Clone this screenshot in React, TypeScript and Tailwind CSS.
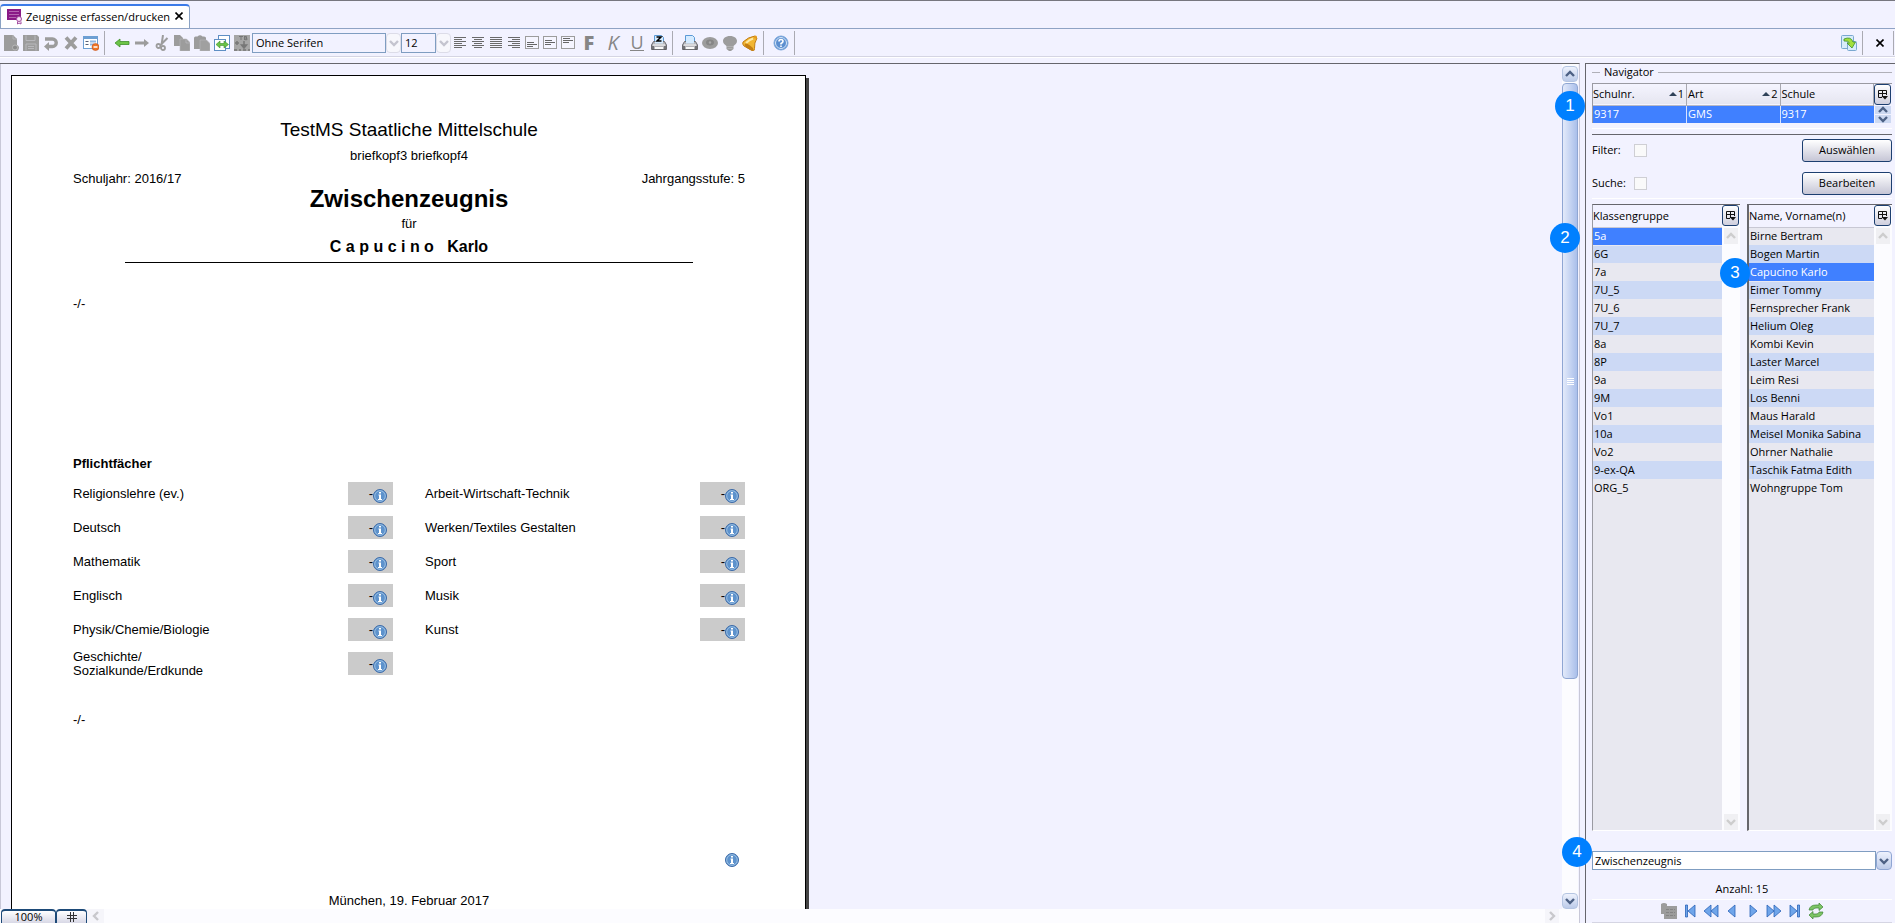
import React from "react";

const classGroups = [
  "5a", "6G", "7a", "7U_5", "7U_6", "7U_7", "8a", "8P",
  "9a", "9M", "Vo1", "10a", "Vo2", "9-ex-QA", "ORG_5",
];

const students = [
  "Birne Bertram",
  "Bogen Martin",
  "Capucino Karlo",
  "Eimer Tommy",
  "Fernsprecher Frank",
  "Helium Oleg",
  "Kombi Kevin",
  "Laster Marcel",
  "Leim Resi",
  "Los Benni",
  "Maus Harald",
  "Meisel Monika Sabina",
  "Ohrner Nathalie",
  "Taschik Fatma Edith",
  "Wohngruppe Tom",
];

const subjectsLeft = [
  "Religionslehre (ev.)",
  "Deutsch",
  "Mathematik",
  "Englisch",
  "Physik/Chemie/Biologie",
  "Geschichte/\nSozialkunde/Erdkunde",
];

const subjectsRight = [
  "Arbeit-Wirtschaft-Technik",
  "Werken/Textiles Gestalten",
  "Sport",
  "Musik",
  "Kunst",
];

interface IconProps {
  children: React.ReactNode;
  size?: number;
}

const Icon = ({ children, size = 16 }: IconProps) => (
  <svg width={size} height={size} viewBox="0 0 16 16" fill="none" aria-hidden="true">
    {children}
  </svg>
);

const GRAY = "#9c9c9c";

const NewIcon = () => (
  <Icon>
    <path d="M1 0h9l4 4v6a3 3 0 1 1-3 6H1z" fill={GRAY} />
    <path d="M10 0v4h4" stroke="#b4b4b8" />
    <circle cx="12" cy="12.500" r="2.500" fill="#8c8c8c" stroke="#b8b8b8" />
  </Icon>
);

const SaveIcon = () => (
  <Icon>
    <path d="M0 0h14l2 2v14H0z" fill={GRAY} />
    <path d="M3 .5v5h9v-5M3 15.500V9h10v6.500" stroke="#b8b8bc" />
    <path d="M5 11.500h6M5 13.500h6" stroke="#b8b8bc" />
  </Icon>
);

const UndoIcon = () => (
  <Icon>
    <path d="M2 4h7.500a3.500 3.500 0 0 1 0 7.500H5" stroke={GRAY} strokeWidth="3.400" />
    <path d="M6 7v9L1 11.500z" fill={GRAY} />
  </Icon>
);

const DeleteIcon = () => (
  <Icon>
    <path d="M3 2.500l10 11M13 2.500l-10 11" stroke={GRAY} strokeWidth="3.800" />
  </Icon>
);

const FormRemoveIcon = () => (
  <Icon>
    <rect x=".5" y="1.500" width="14" height="12" fill="#fff" stroke="#6d9fd3" />
    <path d="M1 3h13" stroke="#6d9fd3" strokeWidth="2" />
    <path d="M2.500 6.500h3M2.500 9.500h3" stroke="#555f78" />
    <path d="M7 6.500h6M7 9.500h4" stroke="#8fb6e2" strokeWidth="2" />
    <circle cx="12.500" cy="12" r="3.500" fill="#ee7526" stroke="#c8511b" strokeWidth=".6" />
    <path d="M10.500 12h4" stroke="#fff" strokeWidth="1.500" />
  </Icon>
);

const ArrowLeftIcon = () => (
  <Icon>
    <path d="M1 8l5-4v2.500h9v3H6V12z" fill="#6cc447" stroke="#3f8f2b" strokeWidth=".8" />
  </Icon>
);

const ArrowRightIcon = () => (
  <Icon>
    <path d="M15 8l-5-4v2.500H1v3h9V12z" fill={GRAY} />
  </Icon>
);

const CutIcon = () => (
  <Icon>
    <path d="M9 0L7.500 10M13.500 3L6 10.500" stroke={GRAY} strokeWidth="2" />
    <circle cx="4.500" cy="11" r="2" stroke={GRAY} strokeWidth="1.800" />
    <circle cx="9" cy="13" r="2" stroke={GRAY} strokeWidth="1.800" />
  </Icon>
);

const CopyIcon = () => (
  <Icon>
    <path d="M0 0h6l3 3v8H0z" fill={GRAY} />
    <path d="M6 4h6.500l3.500 3.500V16H6z" fill={GRAY} stroke="#b8b8bc" strokeWidth=".6" />
    <path d="M12 4.500v3.500h4" stroke="#b8b8bc" strokeWidth=".8" />
  </Icon>
);

const PasteIcon = () => (
  <Icon>
    <path d="M0 3q0-1.500 1.500-1.500h2Q6-1 8.500 1.500h1.500Q12 1.500 12 3v11H0z" fill={GRAY} />
    <path d="M6 5h6.500L16 8.500V16H6z" fill="#a0a0a0" stroke="#b8b8bc" strokeWidth=".6" />
  </Icon>
);

const SwapPagesIcon = () => (
  <Icon>
    <rect x="4.500" y=".5" width="11" height="13" fill="#fff" stroke="#5f8fc4" />
    <rect x=".5" y="4.500" width="11" height="11" fill="#fff" stroke="#5f8fc4" />
    <path d="M2 9.500L6 6v2.500h4V6l4.500 3.500-4.500 3.500v-2.500H6V13z" fill="#6cc447" stroke="#3f8f2b" strokeWidth=".6" />
  </Icon>
);

const TextBlockIcon = () => (
  <Icon>
    <rect width="16" height="16" fill="#a6a6a6" />
    <path d="M5 1.500h4M7 1.500V5M10.500 1v4M10.500 1.500h2v1.500h-2M12 3.500h1v1.200h-2" stroke="#777" />
    <path d="M1 8h4M3 6v4M10 6v5M7.500 10L10 13l2.500-3z" stroke="#777" strokeWidth="1.500" fill="#777" />
    <path d="M0 15h3M5 15h2M9 15h3M14 15h2" stroke="#777" strokeWidth="1.500" />
  </Icon>
);

interface AlignIconProps {
  lines: [number, number][];
}

const AlignIcon = ({ lines }: AlignIconProps) => (
  <svg width="12" height="12" viewBox="0 0 12 12" aria-hidden="true">
    {lines.map(([x, w], i) => (
      <rect key={i} x={x} y={i * 2} width={w} height="1" fill="#6a6a6a" />
    ))}
  </svg>
);

interface BoxIconProps {
  top: number;
}

const BoxIcon = ({ top }: BoxIconProps) => (
  <svg width="14" height="13" viewBox="0 0 14 13" aria-hidden="true">
    <rect x=".5" y=".5" width="13" height="12" fill="#f5f5ff" stroke="#9c9c9c" />
    <rect x="2" y={top} width="7" height="1" fill="#666" />
    <rect x="2" y={top + 2} width="10" height="1" fill="#666" />
    <rect x="2" y={top + 4} width="6" height="1" fill="#666" />
  </svg>
);

interface PrinterIconProps {
  marked?: boolean;
}

const PrinterIcon = ({ marked }: PrinterIconProps) => (
  <Icon>
    <path d="M3.500.5h7l2 2V8h-9z" fill="#d5ebff" stroke="#5a9ad6" />
    <path d="M2.500 6.500h11l2 3.500v4.500H.5V10z" fill="#b4b4ba" stroke="#6d6d72" />
    <path d="M4 6h8v2.500H4z" fill="#d5ebff" />
    <path d="M2 10h12" stroke="#fff" />
    <path d="M4 13h8" stroke="#fafafa" strokeWidth="2" />
    <path d="M2 11v4M14 11v4" stroke="#5d5d62" strokeWidth="1.500" />
    {marked && <path d="M5.500 2h4.500L6 6h4.500" stroke="#000" strokeWidth="1.500" />}
  </Icon>
);

const EyeIcon = () => (
  <Icon>
    <ellipse cx="8" cy="8" rx="8" ry="6" fill={GRAY} />
    <ellipse cx="8" cy="7.500" rx="4" ry="3" fill="#868686" />
    <circle cx="8" cy="7.500" r="1.200" fill="#aaa" />
  </Icon>
);

const BulbIcon = () => (
  <Icon>
    <path d="M8 1c4.500 0 7 2.500 7 5s-2 3.500-3.500 5v3L9 16H7l-2.500-2v-3C3 9.500 1 8.500 1 6s2.500-5 7-5z" fill={GRAY} />
    <path d="M5 11.500h6M5.500 13.500h5" stroke="#b0b0b0" />
  </Icon>
);

const BellIcon = () => (
  <Icon>
    <path d="M13 1Q6 2 1 7q-1 2 1 4l8 4.500q3 .5 2.500-2Q12 8 15 3z" fill="#f2b632" stroke="#c07c12" />
    <path d="M11 3.500Q7 5 4 8" stroke="#fde9a4" strokeWidth="2" />
    <ellipse cx="7" cy="12" rx="5" ry="1.800" transform="rotate(36 7 12)" fill="#c57f12" />
    <circle cx="13.500" cy="2" r="1.500" fill="#e39b1e" />
  </Icon>
);

const HelpIcon = () => (
  <Icon>
    <circle cx="8" cy="8" r="7" fill="#5b8fd0" stroke="#7ea9dc" />
    <circle cx="8" cy="8" r="5.500" stroke="#d8e7f8" />
    <path d="M6 6.500q0-2 2-2t2 1.700Q10 7.500 8 8.500v1M8 10.500V12" stroke="#fff" strokeWidth="1.600" />
  </Icon>
);

const RefreshPagesIcon = () => (
  <Icon>
    <rect x=".5" y=".5" width="12" height="13" rx="1" fill="#d8ecfb" stroke="#7aa8d0" />
    <rect x="6.500" y="6.500" width="9" height="9" rx="1" fill="#d8ecfb" stroke="#7aa8d0" />
    <path d="M3 4Q10 1 12 7h2.500L11 13 6 8h2.500Q7.500 5.500 3 6z" fill="#a3e03c" stroke="#3f8f2b" strokeWidth=".8" />
  </Icon>
);

const InfoIcon = () => (
  <svg width="14" height="14" viewBox="0 0 14 14" className="shrink-0" aria-hidden="true">
    <circle cx="7" cy="7" r="6.500" fill="#5d92cc" stroke="#3c6aa8" />
    <circle cx="7" cy="7" r="5.300" fill="none" stroke="#a9cbe9" strokeWidth=".8" />
    <path d="M6 3h2v1.500H6zM5.500 5.500H8V10h1v1H5v-1h1V6.500h-.5z" fill="#fff" />
  </svg>
);

const ColumnsIcon = () => (
  <svg width="10" height="10" viewBox="0 0 10 10" fill="none" aria-hidden="true">
    <path d="M4 7.500H.5v-7h8V5M0 3.500h9M4.500 1v6" stroke="#111" />
    <path d="M3.500 6H10L7 9.500z" fill="#111" />
  </svg>
);

interface ChevronProps {
  dir: "up" | "down" | "left" | "right";
  color?: string;
}

const chevronPaths = {
  up: "M1 7l4-4 4 4",
  down: "M1 3l4 4 4-4",
  left: "M7 1L3 5l4 4",
  right: "M3 1l4 4-4 4",
};

const Chevron = ({ dir, color = "#4d6185" }: ChevronProps) => (
  <svg width="10" height="10" viewBox="0 0 10 10" fill="none" className="shrink-0" aria-hidden="true">
    <path d={chevronPaths[dir]} stroke={color} strokeWidth="2.400" />
  </svg>
);

interface ToolButtonProps {
  label: string;
  width?: string;
  children: React.ReactNode;
}

const ToolButton = ({ label, width = "w-5", children }: ToolButtonProps) => (
  <button type="button" aria-label={label} className={`flex h-6 shrink-0 items-center justify-center ${width}`}>
    {children}
  </button>
);

const Separator = () => (
  <div className="w-[11px] shrink-0 pl-[3px]">
    <div className="h-6 w-px bg-[#aaaab2]" />
  </div>
);

interface ToolSelectProps {
  label: string;
  value: string;
  width: string;
}

const ToolSelect = ({ label, value, width }: ToolSelectProps) => (
  <div className={`relative flex h-5 shrink-0 ${width}`}>
    <select
      aria-label={label}
      className="mr-[15px] min-w-0 flex-1 appearance-none border border-[#7f9dc1] bg-[#f2f2ff] pl-[3px] text-[11px] leading-[17px]"
    >
      <option>{value}</option>
    </select>
    <span className="pointer-events-none absolute inset-y-0 right-0 flex w-[15px] items-center justify-center rounded-sm border border-[#dcdce8] bg-[#f7f7fc]">
      <Chevron dir="down" color="#c4c4cf" />
    </span>
  </div>
);

const TabStrip = () => (
  <div className="flex h-7 items-end border-t border-[#77777f]">
    <div className="flex h-6 items-center rounded-t-sm border-x border-t-2 border-x-[#8aa2c4] border-t-[#3c7be8] bg-white pr-1 pl-[6px]">
      <svg width="16" height="16" viewBox="0 0 16 16" aria-hidden="true">
        <path d="M0 0h14v11H0z" fill="#8a1a86" />
        <path d="M2 2.500h10M2 5.500h10M2 8.500h7" stroke="#b566b2" />
        <circle cx="12" cy="10" r="2.500" fill="#f3dff2" stroke="#a34ba0" />
        <path d="M10.500 12.500V15l1.500-1 2 1v-2.500" fill="none" stroke="#a34ba0" />
      </svg>
      <span className="ml-[3px] text-[11px]">Zeugnisse erfassen/drucken</span>
      <button type="button" aria-label="Tab schließen" className="ml-[3px] flex h-5 w-3 items-start justify-center pt-[5px]">
        <svg width="8" height="8" viewBox="0 0 8 8" aria-hidden="true">
          <path d="M.5.5l7 7M7.500.5l-7 7" stroke="#000" strokeWidth="1.600" />
        </svg>
      </button>
    </div>
  </div>
);

const Toolbar = () => (
  <div className="flex h-[29px] items-center border-t border-b border-t-[#8fa3c4] border-b-[#d5d5e3] pl-px">
    <ToolButton label="Neu"><NewIcon /></ToolButton>
    <ToolButton label="Speichern"><SaveIcon /></ToolButton>
    <ToolButton label="Rückgängig"><UndoIcon /></ToolButton>
    <ToolButton label="Löschen"><DeleteIcon /></ToolButton>
    <ToolButton label="Formular"><FormRemoveIcon /></ToolButton>
    <Separator />
    <ToolButton label="Zurück"><ArrowLeftIcon /></ToolButton>
    <ToolButton label="Vor"><ArrowRightIcon /></ToolButton>
    <ToolButton label="Ausschneiden"><CutIcon /></ToolButton>
    <ToolButton label="Kopieren"><CopyIcon /></ToolButton>
    <ToolButton label="Einfügen"><PasteIcon /></ToolButton>
    <ToolButton label="Seiten tauschen"><SwapPagesIcon /></ToolButton>
    <ToolButton label="Textbaustein"><TextBlockIcon /></ToolButton>
    <ToolSelect label="Schriftart" value="Ohne Serifen" width="w-[149px]" />
    <ToolSelect label="Schriftgröße" value="12" width="w-[50px]" />
    <ToolButton label="Linksbündig" width="w-[18px]">
      <AlignIcon lines={[[0, 12], [0, 8], [0, 12], [0, 8], [0, 12], [0, 8]]} />
    </ToolButton>
    <ToolButton label="Zentriert" width="w-[18px]">
      <AlignIcon lines={[[0, 12], [2, 8], [0, 12], [2, 8], [0, 12], [2, 8]]} />
    </ToolButton>
    <ToolButton label="Blocksatz" width="w-[18px]">
      <AlignIcon lines={[[0, 12], [0, 12], [0, 12], [0, 12], [0, 12], [0, 12]]} />
    </ToolButton>
    <ToolButton label="Rechtsbündig" width="w-[18px]">
      <AlignIcon lines={[[0, 12], [4, 8], [0, 12], [4, 8], [0, 12], [4, 8]]} />
    </ToolButton>
    <ToolButton label="Unten" width="w-[18px]"><BoxIcon top={6} /></ToolButton>
    <ToolButton label="Mitte" width="w-[18px]"><BoxIcon top={4} /></ToolButton>
    <ToolButton label="Oben" width="w-[18px]"><BoxIcon top={2} /></ToolButton>
    <ToolButton label="Fett" width="w-6">
      <span className="text-xl leading-5 font-extrabold text-[#868686]">F</span>
    </ToolButton>
    <ToolButton label="Kursiv" width="w-6">
      <span className="text-xl leading-5 font-medium text-[#868686] italic">K</span>
    </ToolButton>
    <ToolButton label="Unterstrichen" width="w-6">
      <span className="border-b border-[#868686] text-lg leading-4 font-medium text-[#868686]">U</span>
    </ToolButton>
    <ToolButton label="Zeugnis drucken"><PrinterIcon marked /></ToolButton>
    <Separator />
    <ToolButton label="Drucken"><PrinterIcon /></ToolButton>
    <ToolButton label="Vorschau"><EyeIcon /></ToolButton>
    <ToolButton label="Hinweis"><BulbIcon /></ToolButton>
    <ToolButton label="Erinnerung"><BellIcon /></ToolButton>
    <Separator />
    <ToolButton label="Hilfe"><HelpIcon /></ToolButton>
    <Separator />
    <div className="ml-auto flex items-center">
      <ToolButton label="Aktualisieren"><RefreshPagesIcon /></ToolButton>
      <Separator />
      <ToolButton label="Schließen">
        <svg width="8" height="8" viewBox="0 0 8 8" aria-hidden="true">
          <path d="M.5.5l7 7M7.500.5l-7 7" stroke="#000" strokeWidth="1.600" />
        </svg>
      </ToolButton>
      <div className="mr-px ml-[3px] h-6 w-px bg-[#aaaab2]" />
    </div>
  </div>
);

interface SubjectColumnProps {
  subjects: string[];
  className: string;
}

const SubjectColumn = ({ subjects, className }: SubjectColumnProps) => (
  <ul className={`flex flex-col gap-[11px] ${className}`}>
    {subjects.map((subject) => (
      <li key={subject} className="flex h-[23px] items-center justify-between">
        <span className="leading-[14px] whitespace-pre">{subject}</span>
        <span className="flex h-[23px] w-[45px] items-center justify-end bg-[#cbcbcb] pr-[6px]">
          -
          <span className="mt-1">
            <InfoIcon />
          </span>
        </span>
      </li>
    ))}
  </ul>
);

const Certificate = () => (
  <article className="w-[795px] shrink-0 border border-black bg-white pr-[60px] pl-[61px] font-['Liberation_Sans',Arial,sans-serif] text-[13px] leading-4 text-black shadow-[3px_3px_0_#444444]">
    <header className="pt-[42px] text-center">
      <p className="text-[19px] leading-6">TestMS Staatliche Mittelschule</p>
      <p className="mt-[6px]">briefkopf3 briefkopf4</p>
      <div className="mt-[7px] flex justify-between">
        <span>Schuljahr: 2016/17</span>
        <span>Jahrgangsstufe: 5</span>
      </div>
      <h1 className="text-2xl leading-6 font-bold">Zwischenzeugnis</h1>
      <p className="mt-[5px]">für</p>
      <p className="mx-[52px] mt-[5px] border-b border-black pb-[5px] text-base leading-5 font-bold whitespace-pre">
        C a p u c i n o{"   "}Karlo
      </p>
    </header>
    <p className="mt-[33px]">-/-</p>
    <h2 className="mt-36 font-bold">Pflichtfächer</h2>
    <div className="mt-[10px] flex items-start justify-between">
      <SubjectColumn subjects={subjectsLeft} className="w-80" />
      <SubjectColumn subjects={subjectsRight} className="w-80" />
    </div>
    <p className="mt-[37px]">-/-</p>
    <div className="mt-[125px] flex justify-end pr-[6px]">
      <InfoIcon />
    </div>
    <p className="mt-[26px] pb-40 text-center">München, 19. Februar 2017</p>
  </article>
);

const StatusBar = () => (
  <div className="flex h-[14px] shrink-0 bg-[#fcfcff] pl-px">
    <button type="button" className="h-[14px] w-[55px] rounded-t-sm border border-t-2 border-b-0 border-[#1d4a78] bg-linear-to-b from-white to-[#d8d8e6] text-[11px] leading-3">
      100%
    </button>
    <button type="button" aria-label="Raster" className="flex h-[14px] w-[31px] justify-center rounded-t-sm border border-t-2 border-b-0 border-[#1d4a78] bg-linear-to-b from-white to-[#d8d8e6] pt-px">
      <svg width="10" height="10" viewBox="0 0 10 10" aria-hidden="true">
        <path d="M3.500 0v10M6.500 0v10M0 3.500h10M0 6.500h10" stroke="#333" />
      </svg>
    </button>
    <button type="button" aria-label="Nach links" className="flex w-[17px] items-center justify-center bg-[#f5f5fa]">
      <Chevron dir="left" color="#c8c8cc" />
    </button>
    <button type="button" aria-label="Nach rechts" className="mr-5 ml-auto flex w-[14px] items-center justify-center bg-[#f5f5fa]">
      <Chevron dir="right" color="#c8c8cc" />
    </button>
  </div>
);

const VerticalScrollbar = () => (
  <div className="mr-[1px] flex w-4 shrink-0 flex-col bg-[#fcfcff] pt-[2px]">
    <button type="button" aria-label="Nach oben" className="flex h-4 items-center justify-center rounded-sm border border-[#b5c5e2] bg-linear-to-b from-[#eef2fd] to-[#bccbe9]">
      <Chevron dir="up" />
    </button>
    <div className="mt-px flex h-[596px] flex-col items-center justify-center gap-px rounded-sm border border-[#8fa6d3] bg-linear-to-r from-[#e3eafa] to-[#aabfea]">
      <span className="h-px w-[7px] bg-white" />
      <span className="h-px w-[7px] bg-white" />
      <span className="h-px w-[7px] bg-white" />
      <span className="h-px w-[7px] bg-white" />
    </div>
    <button type="button" aria-label="Nach unten" className="mt-auto flex h-4 items-center justify-center rounded-sm border border-[#b5c5e2] bg-linear-to-b from-[#eef2fd] to-[#bccbe9]">
      <Chevron dir="down" />
    </button>
  </div>
);

interface BadgeProps {
  number: number;
  position: string;
}

const Badge = ({ number, position }: BadgeProps) => (
  <span
    className={`absolute z-10 flex size-[30px] items-center justify-center rounded-full bg-[#0080ff] font-['Liberation_Sans',Arial,sans-serif] text-[17px] text-white ${position}`}
  >
    {number}
  </span>
);

const ColumnsButton = () => (
  <button
    type="button"
    aria-label="Spalten"
    className="flex h-[21px] w-[17px] items-center justify-center rounded-[3px] border border-[#1d3f70] bg-linear-to-b from-white to-[#cfcfde]"
  >
    <ColumnsIcon />
  </button>
);

const SortMark = ({ order }: { order: number }) => (
  <span className="flex items-center gap-px">
    <svg width="8" height="4" viewBox="0 0 8 4" aria-hidden="true">
      <path d="M0 4l4-4 4 4z" fill="#2f4258" />
    </svg>
    {order}
  </span>
);

const SchoolTable = () => (
  <div className="relative mt-[3px] flex border-t border-l border-[#9a9aa2]">
    <Badge number={1} position="top-[7px] -left-[38px]" />
    <table className="flex-1 table-fixed border-collapse">
      <thead>
        <tr className="h-[21px] border-b border-[#b8b8c4] bg-linear-to-b from-[#f4f4ff] to-[#e6e6f0]">
          <th className="w-1/3 border-r border-[#a8a8b0] pr-[2px] font-normal">
            <span className="flex justify-between">Schulnr. <SortMark order={1} /></span>
          </th>
          <th className="w-1/3 border-r border-[#a8a8b0] pr-[2px] pl-px font-normal">
            <span className="flex justify-between">Art <SortMark order={2} /></span>
          </th>
          <th className="w-1/3 border-r border-[#a8a8b0] pl-px text-left font-normal">Schule</th>
        </tr>
      </thead>
      <tbody>
        <tr className="h-[17px] bg-[#4080ff] text-white">
          <td className="border-r border-[#d8e2ff] pl-px leading-4">9317</td>
          <td className="border-r border-[#d8e2ff] pl-px leading-4">GMS</td>
          <td className="pl-px leading-4">9317</td>
        </tr>
      </tbody>
    </table>
    <div className="w-[18px]">
      <ColumnsButton />
      <div className="flex flex-col gap-px pt-px pl-px">
        <button type="button" aria-label="Zeile hoch" className="flex h-2 w-4 items-center justify-center overflow-hidden bg-[#cdd9f2]">
          <Chevron dir="up" />
        </button>
        <button type="button" aria-label="Zeile runter" className="flex h-2 w-4 items-center justify-center overflow-hidden bg-[#cdd9f2]">
          <Chevron dir="down" />
        </button>
      </div>
    </div>
  </div>
);

interface ListTableProps {
  title: string;
  rows: string[];
  selected: string;
  frame: string;
  badge: React.ReactNode;
}

const ListTable = ({ title, rows, selected, frame, badge }: ListTableProps) => (
  <div className={`relative flex border-t border-b border-t-[#66666c] border-b-white ${frame}`}>
    {badge}
    <div className="flex-1 bg-[#e8e8f0]">
      <table className="w-full border-collapse">
        <thead>
          <tr className="h-[22px] border-b border-[#c8c8d4] bg-[#f2f2ff]">
            <th className="text-left font-normal">{title}</th>
          </tr>
        </thead>
        <tbody>
          {rows.map((row) => (
            <tr
              key={row}
              className={
                row === selected
                  ? "h-[18px] border-b border-[#e8e8f0] bg-[#4080ff] text-white"
                  : "h-[18px] even:bg-[#ccd9f5]"
              }
            >
              <td className="pl-px leading-4 whitespace-nowrap">{row}</td>
            </tr>
          ))}
        </tbody>
      </table>
    </div>
    <div className="flex w-[18px] flex-col bg-[#fcfcff]">
      <ColumnsButton />
      <button type="button" aria-label="Nach oben" className="mt-[2px] ml-[2px] flex h-4 w-[14px] items-center justify-center bg-[#f0f0f3]">
        <Chevron dir="up" color="#cdcdcd" />
      </button>
      <button type="button" aria-label="Nach unten" className="mt-auto ml-[2px] flex h-4 w-[14px] items-center justify-center bg-[#f0f0f3]">
        <Chevron dir="down" color="#cdcdcd" />
      </button>
    </div>
  </div>
);

interface FilterRowProps {
  id: string;
  label: string;
  action: string;
}

const FilterRow = ({ id, label, action }: FilterRowProps) => (
  <div className="flex h-[23px] items-center">
    <label htmlFor={id} className="w-[42px]">{label}</label>
    <input id={id} type="checkbox" className="size-[13px] appearance-none border border-[#cfcfd4] bg-[#fafafa]" />
    <button
      type="button"
      className="ml-auto h-[23px] w-[90px] rounded-[3px] border border-[#1d3f70] bg-linear-to-b from-white to-[#c6c6d6]"
    >
      {action}
    </button>
  </div>
);

// Blue triangles and bars of the record navigation
const navIcons = [
  { label: "Erster", path: "M3.500 2h2v12h-2zM13 2v12L6 8z" },
  { label: "Schnell zurück", path: "M8 2v12L1 8zM15 2v12L8 8z" },
  { label: "Zurück", path: "M11 2v12L4 8z" },
  { label: "Weiter", path: "M5 2v12l7-6z" },
  { label: "Schnell vor", path: "M1 2v12l7-6zM8 2v12l7-6z" },
  { label: "Letzter", path: "M3 2v12l7-6zM10.500 2h2v12h-2z" },
];

const RecordNavigation = () => (
  <nav aria-label="Datensätze" className="flex h-6 items-center justify-center border-t border-b border-t-white border-b-[#d5d5e3]">
    <ToolButton label="Liste" width="w-[21px]">
      <Icon>
        <path d="M0 1q3-2 6 0v2h10v13H3v-5H0z" fill={GRAY} />
        <path d="M5 6.500h9M5 9.500h9M5 12.500h9" stroke="#848484" strokeDasharray="3 1" />
      </Icon>
    </ToolButton>
    {navIcons.map((icon) => (
      <ToolButton key={icon.label} label={icon.label} width="w-[21px]">
        <Icon>
          <path d={icon.path} fill="#6fa5ea" stroke="#2a62b8" strokeWidth=".8" />
        </Icon>
      </ToolButton>
    ))}
    <ToolButton label="Neu laden" width="w-[21px]">
      <Icon>
        <path d="M1 7q1-5 7-5h3V0l4 4-4 3.500V5H8Q5 5 5 7z" fill="#7cc465" stroke="#3c8433" strokeWidth=".7" />
        <path d="M15 9q-1 5-7 5H5v2l-4-4 4-3.500V11h3q3 0 3-2z" fill="#7cc465" stroke="#3c8433" strokeWidth=".7" />
      </Icon>
    </ToolButton>
  </nav>
);

const Navigator = () => (
  <aside className="flex w-[310px] shrink-0 flex-col border-t border-l border-[#66666c] pr-[3px] pl-[6px] text-[11px]">
    <div className="flex h-4 items-center gap-1">
      <span className="h-px w-2 bg-[#b0b0b8]" />
      <h2>Navigator</h2>
      <span className="h-px flex-1 bg-[#b0b0b8]" />
    </div>
    <SchoolTable />
    <div className="mt-[5px] flex flex-col gap-[10px] border-t border-white">
      <div className="mt-[5px] border-t border-[#66666c] pt-1">
        <FilterRow id="filter" label="Filter:" action="Auswählen" />
      </div>
      <FilterRow id="suche" label="Suche:" action="Bearbeiten" />
    </div>
    <div className="mt-[3px] flex flex-1 gap-[7px] border-t border-white pt-[5px]">
      <ListTable
        title="Klassengruppe"
        rows={classGroups}
        selected="5a"
        frame="w-[148px] border-l border-l-[#9a9aa2]"
        badge={<Badge number={2} position="top-[18px] -left-[43px]" />}
      />
      <ListTable
        title="Name, Vorname(n)"
        rows={students}
        selected="Capucino Karlo"
        frame="flex-1 border-l-2 border-l-[#66666c]"
        badge={<Badge number={3} position="top-[53px] -left-[29px]" />}
      />
    </div>
    <div className="relative mt-5 flex h-[19px]">
      <Badge number={4} position="-top-[14px] -left-[30px]" />
      <select
        aria-label="Zeugnisart"
        className="mr-4 flex-1 appearance-none border border-[#7f9dc1] bg-white pl-[2px] text-[11px] leading-4"
      >
        <option>Zwischenzeugnis</option>
      </select>
      <span className="pointer-events-none absolute inset-y-0 right-0 flex w-4 items-center justify-center rounded-sm border border-[#8fa6d3] bg-linear-to-b from-[#eef2fd] to-[#bccbe9]">
        <Chevron dir="down" />
      </span>
    </div>
    <p className="mt-[11px] h-[18px] text-center leading-4">Anzahl: 15</p>
    <RecordNavigation />
  </aside>
);

const App = () => {
  return (
    <div className="flex h-screen flex-col overflow-hidden bg-[#f2f2ff] font-['Open_Sans','Noto_Sans',sans-serif] text-black">
      <TabStrip />
      <Toolbar />
      <div className="mb-[5px] h-px bg-white" />
      <div className="flex min-h-0 flex-1">
        <main className="mr-[5px] flex min-w-0 flex-1 flex-col border-t border-r border-t-[#66666c] border-r-[#c8c8d8]">
          <div className="flex min-h-0 flex-1 border-l border-[#c8c8d8]">
            <div className="flex min-w-0 flex-1 items-start overflow-hidden pt-[11px] pl-[10px]">
              <Certificate />
            </div>
            <VerticalScrollbar />
          </div>
          <StatusBar />
        </main>
        <Navigator />
      </div>
    </div>
  );
};

export default App;
